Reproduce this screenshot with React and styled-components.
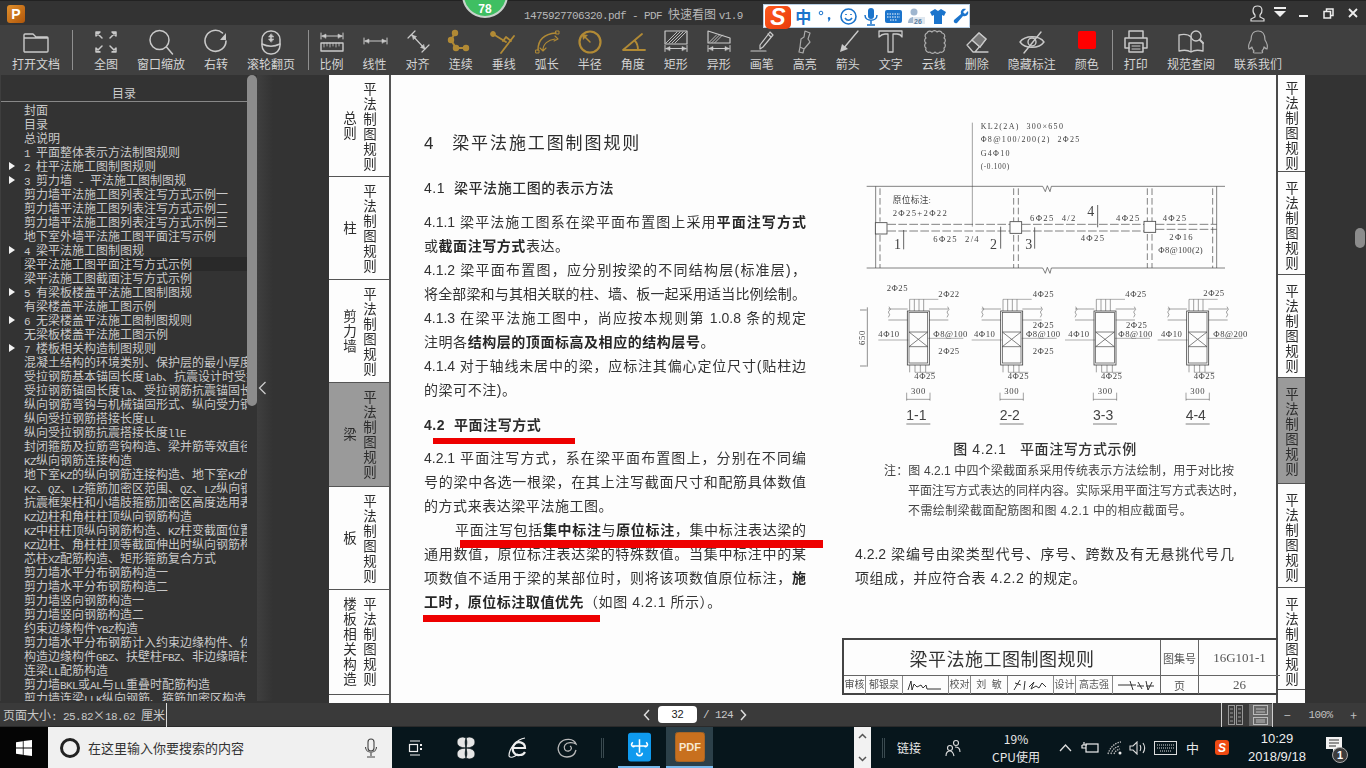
import React from 'react';
import styled, { createGlobalStyle } from 'styled-components';

const CJK = '"Noto Sans CJK SC", sans-serif';
const Global = createGlobalStyle`
  html, body { margin: 0; padding: 0; background: #333; overflow: hidden; }
  * { box-sizing: border-box; }
  #root { width: 1366px; height: 768px; }
`;

/* ---------- shell ---------- */
const Shell = styled.div`
  width: 1366px; height: 768px; display: flex; flex-direction: column;
  font-family: ${CJK}; position: relative; overflow: hidden; background: #333;
`;
const TitleBar = styled.header`
  height: 25px; background: #333; display: flex; align-items: center; position: relative;
  padding-left: 7px; border-top: 1px solid #222; flex: none;
`;
const AppLogo = styled.div`
  width: 18px; height: 18px; border-radius: 3px; margin-top: 1px;
  background: linear-gradient(135deg, #e08f2c, #b0560a);
  color: #fff; font: bold 14px/18px "Liberation Sans", sans-serif; text-align: center;
`;
const TitleText = styled.div`
  position: absolute; left: 524px; top: 4px; color: #b8b8b8; font-size: 12px; line-height: 17px; white-space: nowrap;
`;
const Mono = styled.span`font-family: "Liberation Mono", monospace; font-size: 11px; letter-spacing: -.6px; white-space: pre;`;
const Cross = styled.span`display: inline-block; width: 12px; text-align: center;`;
const Badge = styled.div`
  position: absolute; left: 462px; top: -29px; width: 46px; height: 46px; border-radius: 50%;
  background: #3fbf62; border: 2px solid #c9d2cc; color: #fff;
  font: bold 12px/12px "Liberation Sans", sans-serif; text-align: center; padding-top: 29px;
`;
const WinButtons = styled.div`
  margin-left: auto; display: flex; align-items: center; height: 24px;
`;
const WinBtn = styled.div`
  width: ${p => p.$w || 24}px; height: 24px; display: flex; align-items: center; justify-content: center;
`;
const ImeBar = styled.div`
  position: absolute; left: 763px; top: 3px; width: 207px; height: 24px; z-index: 5;
  background: #fff; border: 1px solid #b8cfe4; display: flex; align-items: center;
  padding-left: 28px; color: #1b74cc;
`;
const ImeLogo = styled.div`
  position: absolute; left: 1px; top: 1px; width: 26px; height: 23px; border-radius: 5px;
  background: linear-gradient(135deg, #ff5a1e, #e93c0c); color: #fff;
  font: italic bold 23px/23px "Liberation Sans", sans-serif; text-align: center;
`;
const ImeItem = styled.span`
  width: 22.5px; flex: none; display: flex; align-items: center; justify-content: center;
  font-size: 16px; font-weight: 700; line-height: 20px;
`;

const Toolbar = styled.nav`
  height: 50px; background: #404040; display: flex; align-items: stretch; padding-left: 2.5px; flex: none;
`;
const Sep = styled.div`
  width: 1px; height: 40px; margin: 5px ${p => p.$r}px 0 ${p => p.$l}px; background: #8f8f8f; flex: none;
`;
const Tool = styled.div`
  flex: none; display: flex; flex-direction: column; align-items: center; padding: 0 9.5px;
`;
const IconSlot = styled.div`
  height: 31px; width: 24px; padding-top: 4px; display: flex; justify-content: center;
  & > svg { flex: none; }
`;
const ToolLabel = styled.div`color: #d4d4d4; font-size: 12px; line-height: 16px; white-space: nowrap;`;

const Main = styled.main`flex: none; height: 628px; display: flex; background: #333;`;

/* ---------- sidebar ---------- */
const Side = styled.aside`
  width: 247px; height: 626px; background: #333; overflow: hidden; flex: none; border-left: 1px solid #3e3e3e;
`;
const SideHead = styled.div`
  height: 27px; border-bottom: 1px solid #888; color: #ccc; font-size: 12px; line-height: 36px; text-align: center;
`;
const Row = styled.div`
  height: 14px; line-height: 14px; font-size: 12px; color: #c9c9c9; white-space: nowrap; overflow: hidden;
  margin-left: 20px; padding-left: 3px; background: ${p => p.$on ? '#292929' : 'transparent'};
`;
const SideList = styled.div`padding-top: 1px;`;
const Arrow = styled.div`
  position: absolute; left: 8px; top: 2.5px; width: 0; height: 0; border-left: 6px solid #f2f2f2;
  border-top: 4.5px solid transparent; border-bottom: 4.5px solid transparent;
`;
const RowOuter = styled.div`position: relative;`;
const Scroll = styled.div`width: 10px; background: #333; flex: none; height: 626px;`;
const Thumb = styled.div`height: 331px; background: #8c8c8c; border-radius: 5px;`;
const Gutter = styled.div`
  width: 72px; flex: none; height: 626px; background: linear-gradient(90deg, #3f3f3f, #333 16px);
  display: flex; padding-top: 305px; padding-left: 1px;
`;

/* ---------- page ---------- */
const Page = styled.div`
  width: 976px; flex: none; display: flex; height: 628px; background: #fdfdfd; color: #2d2d2d;
  font-family: "Liberation Sans", ${CJK}; filter: blur(.3px);
`;
const LeftTabs = styled.div`width: 62px; flex: none; display: flex; flex-direction: column; border-right: 2px solid #555;`;
const RightTabs = styled.div`width: 27px; flex: none; display: flex; flex-direction: column;`;
const Tab = styled.div`
  height: ${p => p.$h}px; flex: none; display: flex; border-bottom: 1.5px solid #555;
  background: ${p => p.$on ? '#9a9a9a' : 'transparent'};
`;
const VText = styled.div`
  writing-mode: vertical-rl; text-orientation: upright; font-size: 13.5px; letter-spacing: 1.5px; white-space: nowrap;
  font-family: ${CJK}; line-height: 16px;
`;
const TabTitle = styled(VText)`width: 16px; margin-left: 13px; align-self: center;`;
const TabBody = styled(VText)`width: 16px; margin-left: ${p => p.$ml}px; padding-top: ${p => p.$pt || 7}px;`;

const Sheet = styled.div`
  width: 887px; flex: none; display: flex; flex-direction: column; border-right: 2px solid #4a4a4a; padding-bottom: 8px;
`;
const Cols = styled.div`height: 563px; display: flex; padding-left: 33px; gap: 44px;`;
const LeftCol = styled.section`width: 382px; padding-top: 57px; flex: none; position: relative;`;
const RightCol = styled.section`width: 400px; padding-top: 35px; flex: none;`;

const H1 = styled.h1`
  margin: 0 0 20px; font-size: 17px; font-weight: 400; height: 24px; line-height: 24px; letter-spacing: 1.9px; word-spacing: -1px; white-space: pre;
`;
const H2 = styled.h2`
  margin: ${p => p.$t || 0}px 0 ${p => p.$b || 0}px; font-size: 14px; font-weight: ${p => p.$w || 400}; height: 24px; line-height: 24px;
  letter-spacing: .55px; white-space: pre;
`;
const Line = styled.p`
  margin: 0; height: 24px; line-height: 24px; font-size: 14px; white-space: nowrap; color: #333;
  text-align: justify; text-align-last: ${p => p.$full ? 'justify' : 'left'};
  letter-spacing: ${p => p.$full ? 0 : .55}px; padding-left: ${p => p.$in || 0}px;
`;
const B = styled.b`font-weight: 700; color: #262626;`;
const Caption = styled.div`
  margin-top: 7px; height: 24px; line-height: 24px; font-size: 14px; color: #333; text-align: center; width: 390px; white-space: pre;
  letter-spacing: .6px; font-weight: 500;
`;
const Notes = styled.div`margin-left: 34px; width: 350px;`;
const Note = styled.p`
  margin: 0; height: 20px; line-height: 20px; font-size: 12px; white-space: nowrap; color: #444;
  padding-left: ${p => p.$in || 0}px; text-align-last: ${p => p.$full ? 'justify' : 'left'}; letter-spacing: ${p => p.$full ? 0 : .4}px;
`;
const Para = styled.div`margin-top: 21px; margin-left: 5px; width: 379px;`;
const RedMark = styled.div`
  position: absolute; left: ${p => p.$l}px; top: ${p => p.$t}px; width: ${p => p.$w}px; height: ${p => p.$h}px; background: #ee0000; z-index: 2;
`;
const Fig = styled.svg`display: block; width: 400px; height: 320px;`;

const TitleBlock = styled.div`
  width: 436px; align-self: flex-end; height: 57px; border: 2px solid #444; border-right: 0; display: grid;
  grid-template-columns: 317px 38px 81px; grid-template-rows: 36px 1fr; margin-right: -2px;
`;
const BlockName = styled.div`
  font-size: 18px; letter-spacing: .5px; display: flex; align-items: center; justify-content: center; color: #333;
  border-bottom: 1px solid #666; border-right: 1px solid #666;
`;
const BlockCell = styled.div`
  display: flex; align-items: center; justify-content: center; border-bottom: ${p => p.$top ? '1px solid #666' : 0};
  border-right: ${p => p.$r ? '1px solid #666' : 0}; font-size: ${p => p.$fs || 11}px; color: #555;
  font-family: ${p => p.$serif ? '"Liberation Serif", serif' : CJK};
`;
const SignRow = styled.div`display: flex; border-right: 1px solid #666; height: 100%;`;
const SignCell = styled.div`
  width: ${p => p.$w}px; flex: none; display: flex; align-items: center; justify-content: center; font-size: 10px; color: #555;
  border-right: ${p => p.$last ? 0 : '1px solid #888'}; white-space: pre; overflow: hidden; line-height: 18px;
`;

/* ---------- overlays ---------- */
const RightThumb = styled.div`
  position: absolute; left: 1355px; top: 228px; width: 10px; height: 20px; border-radius: 5px; background: #8c8c8c;
`;

/* ---------- status ---------- */
const Status = styled.footer`
  height: 24px; background: #3a3a3a; display: flex; align-items: center; color: #c8c8c8; font-size: 12px; flex: none; border-bottom: 1px solid #2a2a2a;
`;
const SizeText = styled.div`width: 167px; padding-left: 3px; height: 24px; line-height: 24px; border-right: 1px solid #ddd; white-space: nowrap; flex: none;`;
const Pager = styled.div`margin-left: 476px; display: flex; align-items: center; width: 110px; flex: none;`;
const PageInput = styled.div`
  width: 39px; height: 17px; background: #fff; border-radius: 4px; color: #222; font: 11px/17px "Liberation Sans", sans-serif; text-align: center; margin: 0 6px 0 7px;
`;
const PageCount = styled(Mono)`margin-right: 6px;`;
const ViewBar = styled.div`margin-left: 468px; display: flex; align-items: center; height: 24px;`;
const VSep = styled.div`width: 1px; height: 24px; background: #cfcfcf; flex: none;`;
const ViewBtn = styled.div`
  width: ${p => p.$w}px; height: 22px; display: flex; align-items: center; justify-content: center; background: ${p => p.$on ? '#666' : 'transparent'};
`;
const Zoomer = styled.div`display: flex; align-items: center; width: 92px; justify-content: space-between; padding: 0 8px 0 11px; color: #c0c0c0;`;

const Taskbar = styled.div`
  height: 41px; background: #07161c; display: flex; align-items: stretch; color: #e8e8e8; flex: none; position: relative;
`;
const Start = styled.div`width: 48px; background: #050505; display: flex; align-items: center; justify-content: center; flex: none;`;
const Search = styled.div`
  width: 344px; background: #f0f0f0; display: flex; align-items: center; flex: none; padding-left: 12px; color: #333; font-size: 13px;
`;
const Ring = styled.div`width: 20px; height: 20px; border: 3px solid #222; border-radius: 50%; margin-right: 8px; flex: none;`;
const MicGap = styled.div`margin-left: 120px; display: flex;`;
const TaskIcon = styled.div`
  width: ${p => p.$w}px; flex: none; display: flex; align-items: center; justify-content: center;
  background: ${p => p.$on ? '#2c4049' : 'transparent'}; border-bottom: ${p => p.$line ? '2px solid #76b9ed' : 0};
`;
const TrayIcon = styled.div`margin-left: ${p => p.$ml}px; flex: none; display: flex; align-items: center;`;
const ScrollBox = styled.div`
  width: 17px; background: #f2f2f2; margin-left: 141px; display: flex; flex-direction: column; justify-content: space-between; align-items: center; padding: 6px 0; flex: none; color: #555;
`;
const TrayText = styled.div`
  width: ${p => p.$w}px; margin-left: ${p => p.$ml || 0}px; flex: none; text-align: center; font-size: ${p => p.$fs || 12}px; line-height: 18px; align-self: center; white-space: pre-line; color: #e8e8e8;
`;
const Bar = styled.div`width: 3px; height: 20px; border-left: 1px solid #3a4a50; border-right: 1px solid #3a4a50; align-self: center; flex: none; margin: 0 ${p => p.$m || 0}px;`;
const DateText = styled.div`
  width: 74px; text-align: center; font: 13px/18px "Liberation Sans", sans-serif; align-self: center; white-space: pre-line; flex: none; color: #eee; margin-left: 11px;
`;
const NoteBadge = styled.div`
  position: absolute; left: 1332px; top: 747px; width: 16px; height: 16px; border-radius: 50%;
  background: #3c3c3c; border: 1px solid #aaa; color: #fff; font: bold 11px/14px "Liberation Sans", sans-serif; text-align: center;
`;

/* ---------- helpers ---------- */
const Mixed = ({ t }) => t.split(/([\x20-\x7e]+)/).map((s, i) =>
  /^[\x20-\x7e]+$/.test(s) ? <Mono key={i}>{s}</Mono> : s);

const W = '#c9c9c9', G = '#b18a35';
const Ic = ({ children, w = 30, h = 27, c = W, sw = 1.6, fill = 'none' }) => (
  <svg width={w} height={h} viewBox={`0 0 ${w} ${h}`} fill={fill} stroke={c} strokeWidth={sw} strokeLinecap="round" strokeLinejoin="round">{children}</svg>
);
const hatch = (x1, x2, y1, y2, step) => {
  const out = [];
  for (let x = x1; x < x2; x += step) out.push(<line key={x} x1={x} y1={y2} x2={x + (y2 - y1)} y2={y1} strokeWidth=".9" />);
  return out;
};
const DimBar = ({ y = 19, a = 4, b = 26 }) => (<>
  <path d={`M${a} ${y - 3}v6M${b} ${y - 3}v6M${a + 1} ${y}H${b - 1}`} strokeWidth="1" />
  <path d={`M${a + 1} ${y}l4-2v4zM${b - 1} ${y}l-4-2v4z`} fill={W} strokeWidth=".5" />
</>);

const icons = {
  open: <Ic sw={1.4}><path d="M4 5h8l3 3h11a1 1 0 0 1 1 1v13a1 1 0 0 1-1 1H4a1 1 0 0 1-1-1V6a1 1 0 0 1 1-1zM3 9h24" /></Ic>,
  full: <Ic sw={1.5}><path d="M5 3l6 6M5 3v4l4-4zM25 3l-6 6M25 3v4l-4-4zM5 23l6-6M5 23v-4l4 4zM25 23l-6-6M25 23v-4l-4 4z" /></Ic>,
  zoom: <Ic sw={1.5}><circle cx="13.5" cy="11" r="9.5" /><path d="M20.5 18l6 7" /></Ic>,
  rot: <Ic sw={1.6}><path d="M25 12a10.5 10.5 0 1 1-3.5-8" /><path d="M25 4v7h-6z" fill={W} stroke="none" /></Ic>,
  wheel: <Ic sw={1.5}><rect x="6" y="2" width="18" height="23" rx="8.5" /><path d="M6 15c6 3 12 3 18 0" /><path d="M15 5l-2.5 3h5zM15 13l-2.5-3h5z" fill={W} strokeWidth=".6" /><path d="M15 8v2" /></Ic>,
  scale: <Ic sw={1}><DimBar y={7} /><rect x="4" y="14" width="22" height="8" strokeWidth="1.4" /><path d="M7 14v4M10 14v3M13 14v4M16 14v3M19 14v4M22 14v3" strokeWidth=".8" /></Ic>,
  linear: <Ic sw={1}><DimBar y={12} a={4} b={27} /></Ic>,
  align: <Ic sw={1.2}><path d="M5 9L12 2M19 23l7-7M9 6l13 14" /><path d="M9 6l4.5 1.5-3 3zM22 20l-4.5-1.5 3-3z" fill={W} strokeWidth=".5" /></Ic>,
  cont: <Ic c={G} sw={2}><path d="M9 4l-4 7 5 8h10" /><circle cx="9" cy="4" r="2.2" fill={G} /><circle cx="5" cy="11" r="2.2" fill={G} /><circle cx="10" cy="19" r="2.2" fill={G} /><circle cx="20" cy="19" r="2.2" fill={G} /></Ic>,
  perp: <Ic c={G} sw={1.8}><path d="M4 5l13 8M25 7L12 24M14 12l3-4 5 4" /><circle cx="4" cy="5" r="2" fill={G} /></Ic>,
  arc: <Ic c={G} sw={1.5}><path d="M6 21C6 11 12 5 24 4" /><path d="M11 21c0-6 5-10 12-11M23 7l3 3-4 2M8 19l3 3 3-3" strokeWidth="1.1" /><rect x="24" y="2" width="3" height="3" strokeWidth="1" /><rect x="4" y="21" width="3" height="3" strokeWidth="1" /></Ic>,
  radius: <Ic c={G} sw={2.2}><circle cx="15" cy="13" r="10.5" /><path d="M15 13L9 7" strokeWidth="1.5" /><path d="M7 5l6 1-5 5z" fill={G} stroke="none" /></Ic>,
  angle: <Ic c={G} sw={1.8}><path d="M24 5L5 21h22M17 12c2 2 3 5 3 9" /></Ic>,
  rect: <Ic sw={1}><rect x="4" y="2" width="22" height="13" strokeWidth="1.2" />{hatch(5, 15, 3, 14, 3)}<DimBar y={19.5} /></Ic>,
  shape: <Ic sw={1}><path d="M4 2L26 9v5H4z" strokeWidth="1.2" />{hatch(5, 14, 6, 13.5, 3)}<DimBar y={19.5} /></Ic>,
  pen: <Ic sw={1.2}><path d="M16 18l-3 2 0-4L23 3l3 3zM21 5l3 3M4 22h15" /></Ic>,
  mark: <Ic sw={1.2} c="#aaa"><path d="M15 2l5 2-2 6 2 3-6 7-4-2 1-8 3-2zM10 18l-1 5 4 1 1-4" /></Ic>,
  arrow: <Ic sw={1.4}><path d="M25 2L10 20" /><path d="M7 23l2-8 6 5z" fill={W} stroke="none" /></Ic>,
  text: <Ic sw={1.3}><path d="M3 2h23v6c-1-2-3-3-5-3h-4v18h-5V5H9C7 5 5 6 3 8z" /></Ic>,
  cloud: <Ic sw={1.2} c="#b0b0b0"><path d="M8 4a3 3 0 0 1 5-1 3 3 0 0 1 5 0 3 3 0 0 1 5 1 3 3 0 0 1 2 5 3 3 0 0 1 0 5 3 3 0 0 1 0 5 3 3 0 0 1-4 4 3 3 0 0 1-5 0 3 3 0 0 1-5 0 3 3 0 0 1-4-4 3 3 0 0 1 0-5 3 3 0 0 1 0-5 3 3 0 0 1 1-5z" /></Ic>,
  erase: <Ic sw={1.3}><path d="M5 16L17 4l7 6-11 13H11zM10 11l8 7M11 23h15" /><path d="M17 4l7 6-6 8-8-7z" fill="#777" /></Ic>,
  hide: <Ic sw={1.4}><path d="M3 13c5-7 19-7 24 0-5 7-19 7-24 0z" /><circle cx="15" cy="13" r="4" /><path d="M24 3L7 24" /></Ic>,
  color: <svg width="18" height="18" style={{ marginTop: 2 }}><rect width="18" height="18" rx="2" fill="#f00" /></svg>,
  print: <Ic sw={1.5}><path d="M8 8V2h14v6M8 19H4V9h22v10h-4" /><rect x="8" y="14" width="14" height="9" /><path d="M11 17h8M11 20h8" strokeWidth="1" /></Ic>,
  book: <Ic sw={1.3}><path d="M15 8C12 5 7 5 3 6v16c4-1 9-1 12 1 3-2 8-2 12-1V14M15 8v15" /><circle cx="20" cy="7" r="5" /><path d="M24 11l3 3" strokeWidth="2" /></Ic>,
  qq: <Ic sw={1.2} c="#aaa"><path d="M15 2c5 0 7 4 7 9 2 3 3 6 2 9-1 0-2-1-3-2 0 2-1 3-2 4 1 1 1 2-1 2h-6c-2 0-2-1-1-2-1-1-2-2-2-4-1 1-2 2-3 2-1-3 0-6 2-9 0-5 2-9 7-9z" /></Ic>,
};

const tools = [
  ['打开文档', 'open'], ['|', 2.5, 11.5], ['全图', 'full'], ['窗口缩放', 'zoom'], ['右转', 'rot'], ['滚轮翻页', 'wheel'], ['|', 3, 1.5],
  ['比例', 'scale'], ['线性', 'linear'], ['对齐', 'align'], ['连续', 'cont'], ['垂线', 'perp'], ['弧长', 'arc'], ['半径', 'radius'], ['角度', 'angle'],
  ['矩形', 'rect'], ['异形', 'shape'], ['画笔', 'pen'], ['高亮', 'mark'], ['箭头', 'arrow'], ['文字', 'text'], ['云线', 'cloud'], ['删除', 'erase'],
  ['隐藏标注', 'hide'], ['颜色', 'color'], ['|', 3.5, 1.5], ['打印', 'print'], ['规范查阅', 'book'], ['联系我们', 'qq'],
];

const toc = [
  ['封面'], ['目录'], ['总说明'], ['1 平面整体表示方法制图规则'], ['2 柱平法施工图制图规则', 1], ['3 剪力墙 - 平法施工图制图规', 1],
  ['剪力墙平法施工图列表注写方式示例一'], ['剪力墙平法施工图列表注写方式示例二'], ['剪力墙平法施工图列表注写方式示例三'], ['地下室外墙平法施工图平面注写示例'],
  ['4 梁平法施工图制图规', 1], ['梁平法施工图平面注写方式示例', 0, 1], ['梁平法施工图截面注写方式示例'], ['5 有梁板楼盖平法施工图制图规', 1],
  ['有梁楼盖平法施工图示例'], ['6 无梁楼盖平法施工图制图规则', 1], ['无梁板楼盖平法施工图示例'], ['7 楼板相关构造制图规则', 1],
  ['混凝土结构的环境类别、保护层的最小厚度'], ['受拉钢筋基本锚固长度lab、抗震设计时受拉钢筋'], ['受拉钢筋锚固长度la、受拉钢筋抗震锚固长度'], ['纵向钢筋弯钩与机械锚固形式、纵向受力钢筋'],
  ['纵向受拉钢筋搭接长度LL'], ['纵向受拉钢筋抗震搭接长度llE'], ['封闭箍筋及拉筋弯钩构造、梁并筋等效直径'], ['KZ纵向钢筋连接构造'],
  ['地下室KZ的纵向钢筋连接构造、地下室KZ的'], ['KZ、QZ、LZ箍筋加密区范围、QZ、LZ纵向钢筋'], ['抗震框架柱和小墙肢箍筋加密区高度选用表'], ['KZ边柱和角柱柱顶纵向钢筋构造'],
  ['KZ中柱柱顶纵向钢筋构造、KZ柱变截面位置'], ['KZ边柱、角柱柱顶等截面伸出时纵向钢筋构造'], ['芯柱XZ配筋构造、矩形箍筋复合方式'], ['剪力墙水平分布钢筋构造一'], ['剪力墙水平分布钢筋构造二'],
  ['剪力墙竖向钢筋构造一'], ['剪力墙竖向钢筋构造二'], ['约束边缘构件YBZ构造'], ['剪力墙水平分布钢筋计入约束边缘构件、体'], ['构造边缘构件GBZ、扶壁柱FBZ、非边缘暗柱'],
  ['连梁LL配筋构造'], ['剪力墙BKL或AL与LL重叠时配筋构造'], ['剪力墙连梁LLK纵向钢筋、箍筋加密区构造'],
];

const leftTabs = [['总则', 102], ['柱', 103], ['剪力墙', 103], ['梁', 104, 1], ['板', 103], ['楼板相关构造', 105]];
const rightTabs = [97, 103, 103, 106, 104, 102];

/* ---------- figure ---------- */
const FT = styled.text`
  font-family: "Liberation Serif", ${CJK}; fill: #444; font-size: ${p => p.$s || 26}px;
  letter-spacing: ${p => p.$ls ?? 4}px; white-space: pre;
`;
const SectionTitle = styled.text`font-family: "Liberation Sans", sans-serif; fill: #444; font-size: 42px;`;

const sections = [
  { c: 205, t: '1-1', top: ['2Φ25', 110, 542], top2: ['2Φ22', 265, 560], mid: '4Φ10', midx: 85, hoop: 'Φ8@100', hx: 250, y2: ['2Φ25', 265, 732], bot: '4Φ25' },
  { c: 485, t: '2-2', top: ['4Φ25', 548, 560], y1: ['2Φ25', 548, 655], mid: '4Φ10', midx: 372, hoop: 'Φ8@100', hx: 528, y2: ['2Φ25', 548, 732], bot: '4Φ25' },
  { c: 765, t: '3-3', top: ['4Φ25', 826, 560], y1: ['2Φ25', 828, 655], mid: '4Φ10', midx: 655, hoop: 'Φ8@100', hx: 805, bot: '4Φ25' },
  { c: 1043, t: '4-4', top: ['2Φ25', 1060, 557], mid: '4Φ10', midx: 933, hoop: 'Φ8@200', hx: 1090, bot: '4Φ25' },
];

const Section = ({ s }) => {
  const c = s.c;
  return (
    <g stroke="#444" fill="none" strokeWidth="1.8">
      <path d={`M${c - 90} 597H${c - 32}M${c - 90} 630H${c - 32}M${c + 32} 597H${c + 90}M${c + 32} 630H${c + 90}M${c - 88} 590l4 8-6 8 4 8-4 8M${c + 88} 590l4 8-6 8 4 8-4 8`} strokeWidth="1.5" />
      <rect x={c - 33} y={603} width={66} height={162} strokeWidth="2.5" />
      <rect x={c - 28} y={607} width={56} height={152} strokeWidth="2" />
      <path d={`M${c - 28} 666H${c + 28}M${c - 28} 710H${c + 28}M${c - 28} 666L${c} 688 ${c + 28} 666M${c - 28} 710L${c} 688 ${c + 28} 710`} strokeWidth="2" />
      <path d={`M${c - 26} 568v35M${c - 12} 568v35M${c + 2} 568v35M${c + 16} 568v35M${c - 26} 765v22M${c - 10} 765v22M${c + 6} 765v22M${c + 22} 765v22`} strokeWidth="1.5" />
      <path d={`M${c - 26} 568H${c + 60}`} strokeWidth="1.3" />
      <path d={`M${c - 10} 787H${c + 50}M${c - 120} 690H${c - 30}M${c + 30} 685H${c + 135}`} strokeWidth="1.3" />
      <path d={`M${c - 35} 848v24M${c + 35} 848v24M${c - 35} 868H${c + 35}`} strokeWidth="1.5" />
      <path d={`M${c - 36} 942H${c + 36}`} strokeWidth="2" />
      <g stroke="none" fill="#444">
        <FT $ls={1.5} x={s.top[1]} y={s.top[2]}>{s.top[0]}</FT>
        {s.top2 && <FT $ls={1.5} x={s.top2[1]} y={s.top2[2]}>{s.top2[0]}</FT>}
        {s.y1 && <FT $ls={1.5} x={s.y1[1]} y={s.y1[2]}>{s.y1[0]}</FT>}
        {s.y2 && <FT $ls={1.5} x={s.y2[1]} y={s.y2[2]}>{s.y2[0]}</FT>}
        <FT $ls={1.5} x={s.midx} y={681}>{s.mid}</FT>
        <FT $ls={1.5} x={s.hx} y={680}>{s.hoop}</FT>
        <FT $ls={1.5} x={c - 12} y={806}>{s.bot}</FT>
        <FT $ls={2} x={c - 22} y={852}>300</FT>
        <SectionTitle x={c - 36} y={930}>{s.t}</SectionTitle>
      </g>
    </g>
  );
};

const Figure = () => (
  <Fig viewBox="0 0 1200 960">
    <g stroke="#444" fill="none" strokeWidth="2">
      <path d="M367 38V350" strokeWidth="1.5" />
      <path d="M50 229H578l8 16 6-18 8 18 4-16H1125M50 474H578l8 16 6-18 8 18 4-16H1125" />
      <path d="M77 229V474M1100 229V474" />
      <path d="M90 235V335M90 375V474M491 235V335M505 235V335M491 375V474M505 375V474M892 235V335M906 235V335M892 372V474M906 372V474M1088 235V474" strokeDasharray="20 9" />
      <path d="M112 343H480M112 363H480M516 343H882M516 363H882M917 343H1100M917 358H1100" strokeDasharray="26 7" />
      <rect x="76" y="338" width="35" height="34" fill="#fdfdfd" strokeWidth="2.5" />
      <rect x="480" y="335" width="35" height="35" fill="#fdfdfd" strokeWidth="2.5" />
      <rect x="882" y="334" width="35" height="33" fill="#fdfdfd" strokeWidth="2.5" />
      <path d="M161 360V418M452 350V416M554 352V416M743 285V352" strokeWidth="2.5" />
    </g>
    <FT x={392} y={57} $s={24}>KL2(2A)  300×650</FT>
    <FT x={392} y={97} $s={24}>Φ8@100/200(2)  2Φ25</FT>
    <FT x={392} y={139} $s={24}>G4Φ10</FT>
    <FT x={392} y={178} $s={22} $ls={2}>(-0.100)</FT>
    <FT x={128} y={278} $s={26} $ls={1}>原位标注:</FT>
    <FT x={128} y={317}>2Φ25+2Φ22</FT>
    <FT x={132} y={417} $s={42} $ls={0}>1</FT>
    <FT x={250} y={397}>6Φ25  2/4</FT>
    <FT x={420} y={417} $s={42} $ls={0}>2</FT>
    <FT x={526} y={416} $s={42} $ls={0}>3</FT>
    <FT x={540} y={332}>6Φ25  4/2</FT>
    <FT x={712} y={318} $s={42} $ls={0}>4</FT>
    <FT x={798} y={332}>4Φ25</FT>
    <FT x={938} y={332}>4Φ25</FT>
    <FT x={692} y={392}>4Φ25</FT>
    <FT x={958} y={390}>2Φ16</FT>
    <FT x={925} y={429} $ls={1}>Φ8@100(2)</FT>
    <path d="M30 600H50M30 768H50M52 592V770" stroke="#444" strokeWidth="1.8" fill="none" />
    <FT transform="translate(44 705) rotate(-90)" $ls={2}>650</FT>
    {sections.map(s => <Section key={s.t} s={s} />)}
  </Fig>
);

const Sign = ({ d }) => <svg width="40" height="15" viewBox="0 0 40 15"><path d={d} fill="none" stroke="#333" strokeWidth="1" /></svg>;

export default function App() {
  return (
    <Shell>
      <Global />
      <TitleBar>
        <AppLogo>P</AppLogo>
        <Badge>78</Badge>
        <TitleText><Mono>1475927706320.pdf - PDF </Mono>快速看图 <Mono>v1.9</Mono></TitleText>
        <ImeBar>
          <ImeLogo>S</ImeLogo>
          <ImeItem>中</ImeItem>
          <ImeItem><svg width="20" height="18" viewBox="0 0 20 18" fill="#1b74cc"><circle cx="5" cy="6" r="1.8" fill="none" stroke="#1b74cc" /><path d="M13 10c2 0 2 3-1 5 .5-1 .5-2 .2-3-1-1-.2-2 .8-2z" /></svg></ImeItem>
          <ImeItem><svg width="17" height="17" viewBox="0 0 17 17" fill="none" stroke="#1b74cc" strokeWidth="1.6"><circle cx="8.5" cy="8.5" r="7.5" /><path d="M5 10c2 3 5 3 7 0M6 6v1M11 6v1" /></svg></ImeItem>
          <ImeItem><svg width="14" height="19" viewBox="0 0 14 19" fill="#1b74cc"><rect x="4" y="1" width="6" height="11" rx="3" /><path d="M1 8c0 7 12 7 12 0M7 14v3M3 18h8" fill="none" stroke="#1b74cc" strokeWidth="1.5" /></svg></ImeItem>
          <ImeItem><svg width="17" height="13" viewBox="0 0 17 13"><rect width="17" height="13" rx="2" fill="#1b74cc" /><path d="M2 4h13M2 7h13M5 10h7" stroke="#fff" strokeDasharray="1.5 1" /></svg></ImeItem>
          <ImeItem><svg width="18" height="16" viewBox="0 0 18 16" fill="#9fb6cf"><circle cx="7" cy="4" r="3.5" /><path d="M1 15c0-8 11-8 11 0z" /><rect x="6" y="9" width="12" height="7" fill="#dfe7ef" /><text x="7" y="15.5" fontSize="7" fill="#5a7da0" fontFamily="Liberation Sans">26</text></svg></ImeItem>
          <ImeItem><svg width="16" height="15" viewBox="0 0 16 15" fill="#1b74cc"><path d="M5 0l3 2 3-2 5 3-2 4-2-1v9H4V6L2 7 0 3z" /></svg></ImeItem>
          <ImeItem><svg width="16" height="16" viewBox="0 0 16 16" fill="#1b74cc"><path d="M15 3l-3 3-2-2 3-3c-3-1-6 1-5 5L1 12c-1 2 1 4 3 3l6-7c4 1 6-2 5-5z" /></svg></ImeItem>
        </ImeBar>
        <WinButtons>
          <WinBtn>
            <svg width="15" height="17" viewBox="0 0 15 17" fill="none" stroke="#ddd" strokeWidth="1.2"><path d="M7.5 1c-6 0-5 7-2.500 9v2l-4 2v2h13v-2l-4-2v-2c2.500-2 3.500-9-2.500-9z" /></svg>
          </WinBtn>
          <WinBtn $w={22}>
            <svg width="12" height="12" viewBox="0 0 12 12" fill="#eee"><rect y="0" width="12" height="2" /><path d="M0 4h12L6 10z" /></svg>
          </WinBtn>
          <WinBtn $w={24}><svg width="9" height="9"><rect y="6" width="9" height="2" fill="#eee" /></svg></WinBtn>
          <WinBtn $w={26}>
            <svg width="11" height="11" fill="none" stroke="#eee" strokeWidth="1.5"><rect x="1" y="3.5" width="6.5" height="6.5" /><path d="M3.500 3V1h6.500v6.500H8" /></svg>
          </WinBtn>
          <WinBtn $w={24}>
            <svg width="10" height="10" stroke="#eee" strokeWidth="1.8"><path d="M1 1l8 8M9 1l-8 8" /></svg>
          </WinBtn>
          <WinBtn $w={1} />
        </WinButtons>
      </TitleBar>

      <Toolbar>
        {tools.map(([a, b, c], i) => a === '|'
          ? <Sep key={i} $l={b} $r={c} />
          : <Tool key={a}><IconSlot>{icons[b]}</IconSlot><ToolLabel>{a}</ToolLabel></Tool>)}
      </Toolbar>

      <Main>
        <Side>
          <SideHead>目录</SideHead>
          <SideList>
            {toc.map(([t, arrow, on], i) => (
              <RowOuter key={i}>
                {arrow ? <Arrow /> : null}
                <Row $on={on}><Mixed t={t} /></Row>
              </RowOuter>
            ))}
          </SideList>
        </Side>
        <Scroll><Thumb /></Scroll>
        <Gutter>
          <svg width="10" height="16" viewBox="0 0 10 16" fill="none" stroke="#ccc" strokeWidth="1.3"><path d="M7.500 2L1.500 8l6 6" /></svg>
        </Gutter>
        <Page>
          <LeftTabs>
            {leftTabs.map(([t, h, on]) => (
              <Tab key={t} $h={h} $on={on}>
                <TabTitle>{t}</TabTitle>
                <TabBody $ml={4}>平法制图规则</TabBody>
              </Tab>
            ))}
          </LeftTabs>
          <Sheet>
            <Cols>
              <LeftCol>
                <H1>4   梁平法施工图制图规则</H1>
                <H2 $b={10} $w={500}>4.1  梁平法施工图的表示方法</H2>
                <Line $full>4.1.1 梁平法施工图系在梁平面布置图上采用<B>平面注写方式</B></Line>
                <Line>或<B>截面注写方式</B>表达。</Line>
                <Line $full>4.1.2 梁平面布置图，应分别按梁的不同结构层(标准层)，</Line>
                <Line $full>将全部梁和与其相关联的柱、墙、板一起采用适当比例绘制。</Line>
                <Line $full>4.1.3 在梁平法施工图中，尚应按本规则第 1.0.8 条的规定</Line>
                <Line>注明各<B>结构层的顶面标高及相应的结构层号</B>。</Line>
                <Line $full>4.1.4 对于轴线未居中的梁，应标注其偏心定位尺寸(贴柱边</Line>
                <Line>的梁可不注)。</Line>
                <H2 $t={11} $b={9} $w={700}>4.2  平面注写方式</H2>
                <Line $full>4.2.1 平面注写方式，系在梁平面布置图上，分别在不同编</Line>
                <Line $full>号的梁中各选一根梁，在其上注写截面尺寸和配筋具体数值</Line>
                <Line>的方式来表达梁平法施工图。</Line>
                <Line $full $in={31}>平面注写包括<B>集中标注</B>与<B>原位标注</B>，集中标注表达梁的</Line>
                <Line $full>通用数值，原位标注表达梁的特殊数值。当集中标注中的某</Line>
                <Line $full>项数值不适用于梁的某部位时，则将该项数值原位标注，<B>施</B></Line>
                <Line><B>工时，原位标注取值优先</B>（如图 4.2.1 所示）。</Line>
                <RedMark $l={9} $t={363} $w={142} $h={6} />
                <RedMark $l={36} $t={465} $w={363} $h={8} />
                <RedMark $l={-1} $t={540} $w={177} $h={7} />
              </LeftCol>
              <RightCol>
                <Figure />
                <Caption>图 4.2.1   平面注写方式示例</Caption>
                <Notes>
                  <Note $full>注：图 4.2.1 中四个梁截面系采用传统表示方法绘制，用于对比按</Note>
                  <Note $in={24} $full>平面注写方式表达的同样内容。实际采用平面注写方式表达时，</Note>
                  <Note $in={24}>不需绘制梁截面配筋图和图 4.2.1 中的相应截面号。</Note>
                </Notes>
                <Para>
                  <Line $full>4.2.2 梁编号由梁类型代号、序号、跨数及有无悬挑代号几</Line>
                  <Line>项组成，并应符合表 4.2.2 的规定。</Line>
                </Para>
              </RightCol>
            </Cols>
            <TitleBlock>
              <BlockName>梁平法施工图制图规则</BlockName>
              <BlockCell $top $r>图集号</BlockCell>
              <BlockCell $top $fs={13} $serif>16G101-1</BlockCell>
              <SignRow>
                <SignCell $w={22}>审核</SignCell>
                <SignCell $w={37}>郁银泉</SignCell>
                <SignCell $w={46}><Sign d="M2 12l3-9 1 9 2-6 3 3 4-2 2 3 3-3 1 4h14" /></SignCell>
                <SignCell $w={22}>校对</SignCell>
                <SignCell $w={37}>刘  敏</SignCell>
                <SignCell $w={46}><Sign d="M4 5l6 2M9 2L3 12M14 3l-1 9M18 9l5-5-3 7 5-3 3 2 3-5 4 4" /></SignCell>
                <SignCell $w={22}>设计</SignCell>
                <SignCell $w={37}>高志强</SignCell>
                <SignCell $w={46} $last><Sign d="M2 7h10M14 3l3 9M12 7h8M22 4l4 7M21 8h7M30 3l2 9 4-8M30 8h8" /></SignCell>
              </SignRow>
              <BlockCell $r>页</BlockCell>
              <BlockCell $fs={13} $serif>26</BlockCell>
            </TitleBlock>
          </Sheet>
          <RightTabs>
            {rightTabs.map((h, i) => (
              <Tab key={i} $h={h} $on={i === 3}>
                <TabBody $ml={6} $pt={i === 0 ? 6 : 9}>平法制图规则</TabBody>
              </Tab>
            ))}
          </RightTabs>
        </Page>
      </Main>
      <RightThumb />

      <Status>
        <SizeText>页面大小<Mono>: 25.82</Mono><Cross>×</Cross><Mono>18.62 </Mono>厘米</SizeText>
        <Pager>
          <svg width="8" height="12" viewBox="0 0 8 12" fill="none" stroke="#ddd" strokeWidth="1.5"><path d="M6 1L1.500 6 6 11" /></svg>
          <PageInput>32</PageInput>
          <PageCount>/ 124</PageCount>
          <svg width="8" height="12" viewBox="0 0 8 12" fill="none" stroke="#ddd" strokeWidth="1.5"><path d="M2 1l4.500 5L2 11" /></svg>
        </Pager>
        <ViewBar>
          <VSep />
          <ViewBtn $w={27}>
            <svg width="15" height="20" fill="none" stroke="#999"><rect x=".5" y=".5" width="6" height="19" /><rect x="8.5" y=".5" width="6" height="19" /><path d="M2 4h3M2 8h3M2 12h3M2 16h3M10 4h3M10 8h3M10 12h3M10 16h3" /></svg>
          </ViewBtn>
          <ViewBtn $w={23} $on>
            <svg width="15" height="20" fill="none" stroke="#bbb"><rect x=".5" y=".5" width="14" height="9" /><rect x=".5" y="12.5" width="14" height="7" /><path d="M3 4h9M3 7h9M3 15h9M3 17h9" /></svg>
          </ViewBtn>
          <VSep />
          <Zoomer>
            <span>−</span>
            <Mono>100%</Mono>
            <span>+</span>
          </Zoomer>
        </ViewBar>
      </Status>

      <Taskbar>
        <Start>
          <svg width="16" height="16" viewBox="0 0 16 16" fill="#fff"><path d="M0 2.200L6.800 1.200V7.500H0zM7.600 1.100L16 0V7.500H7.600zM0 8.400H6.800V14.800L0 13.800zM7.600 8.400H16V16L7.600 14.900z" /></svg>
        </Start>
        <Search>
          <Ring />
          在这里输入你要搜索的内容
          <MicGap>
            <svg width="14" height="20" viewBox="0 0 14 20" fill="none" stroke="#444" strokeWidth="1.1"><rect x="4" y="1" width="6" height="12" rx="3" /><path d="M1.500 9c0 7 11 7 11 0M7 15v3M3 19h8" /></svg>
          </MicGap>
        </Search>
        <TaskIcon $w={46}>
          <svg width="16" height="16" viewBox="0 0 16 16" fill="none" stroke="#eee" strokeWidth="1.2"><path d="M3 1h10M3 15h10" /><rect x="2.500" y="4.500" width="8" height="7" /><path d="M14 4v2M14 8v2" strokeWidth="2" /></svg>
        </TaskIcon>
        <TaskIcon $w={56}>
          <svg width="22" height="24" viewBox="0 0 22 24" fill="#e6e6e6"><path d="M11 12C6 12 2 10 2 6c0-4 4-5 6-5 3 0 5 3 3 11zM11 12c5 0 9-2 9-6 0-4-4-5-6-5-3 0-5 3-3 11zM11 12c-5 0-9 2-9 6 0 4 4 5 6 5 3 0 5-3 3-11zM11 12c5 0 9 2 9 6 0 4-4 5-6 5-3 0-5-3-3-11z" stroke="#07151b" strokeWidth=".8" /></svg>
        </TaskIcon>
        <TaskIcon $w={48}>
          <svg width="22" height="24" viewBox="0 0 22 24" fill="none" stroke="#eee" strokeWidth="2.2"><path d="M6 12h12c0-6-8-8-11-3-3 5 0 11 6 10 2 0 4-1 5-3" /><path d="M18 2C10 3 2 12 2 20c2 3 6 0 9-2" strokeWidth="1.2" /></svg>
        </TaskIcon>
        <TaskIcon $w={50}>
          <svg width="22" height="22" viewBox="0 0 22 22" fill="none" stroke="#bbb" strokeWidth="1.3"><path d="M4 6c4-5 14-5 16 1-3-2-9-2-11 1-2 3 0 7 4 6 3-1 3-4 1-5M4 6C0 12 3 20 11 20c5 0 8-3 9-7" /></svg>
        </TaskIcon>
        <TaskIcon $w={9} />
        <Bar />
        <TaskIcon $w={14} />
        <TaskIcon $w={42} $line>
          <svg width="23" height="30" viewBox="0 0 24 30"><rect width="24" height="30" rx="3" fill="#0f9aee" /><path d="M12 7v14M5 14h14M5 10c-3 3 0 6 2 4M19 10c3 3 0 6-2 4M9 21c0 4 6 4 6 0" stroke="#fff" strokeWidth="1.6" fill="none" /></svg>
        </TaskIcon>
        <TaskIcon $w={6} />
        <TaskIcon $w={47} $on $line>
          <svg width="30" height="30" viewBox="0 0 30 30"><rect width="30" height="30" rx="4" fill="#c8701e" stroke="#8a5a2a" /><text x="15" y="19" textAnchor="middle" fontSize="11" fontWeight="700" fill="#f7e8d0" fontFamily="Liberation Sans">PDF</text></svg>
        </TaskIcon>
        <ScrollBox>
          <svg width="9" height="6" viewBox="0 0 9 6" fill="none" stroke="#555" strokeWidth="1.5"><path d="M1 5l3.500-3.500L8 5" /></svg>
          <svg width="9" height="6" viewBox="0 0 9 6" fill="none" stroke="#555" strokeWidth="1.5"><path d="M1 1l3.500 3.500L8 1" /></svg>
        </ScrollBox>
        <Bar $m={11} />
        <TrayText $w={26}>链接</TrayText>
        <TaskIcon $w={62}>
          <svg width="16" height="18" viewBox="0 0 16 18" fill="none" stroke="#ddd" strokeWidth="1.1"><circle cx="5" cy="9" r="2.500" /><circle cx="11" cy="4" r="2.500" /><path d="M1 17c0-4 2-5 4-5s3 1 4 5M10 8c3 0 5 1 5 5" /></svg>
        </TaskIcon>
        <TrayText $w={64}>{'19%\nCPU使用'}</TrayText>
        <TrayIcon $ml={11}>
          <svg width="13" height="8" viewBox="0 0 13 8" fill="none" stroke="#ddd" strokeWidth="1.3"><path d="M1 7l5.500-6L12 7" /></svg>
        </TrayIcon>
        <TrayIcon $ml={9}>
          <svg width="18" height="14" viewBox="0 0 18 14" fill="none" stroke="#eee" strokeWidth="1.2"><rect x="5" y="3" width="12" height="8" /><path d="M1 4h5M3 1v3M1 4v3h4" /></svg>
        </TrayIcon>
        <TrayIcon $ml={8}>
          <svg width="16" height="14" viewBox="0 0 16 14" fill="none" stroke="#bbb" strokeWidth="1.3"><path d="M1 13C3 6 8 2 14 1M4 13c1-4 4-7 9-8M7 13c1-2 2-4 6-5" strokeDasharray="1.5 1" /><circle cx="13" cy="12" r="1.5" fill="#eee" stroke="none" /></svg>
        </TrayIcon>
        <TrayIcon $ml={6}>
          <svg width="18" height="14" viewBox="0 0 18 14" fill="none" stroke="#ddd" strokeWidth="1.1"><path d="M1 5h3l4-4v12l-4-4H1zM11 4c1 2 1 4 0 6M14 2c2 3 2 7 0 10" /></svg>
        </TrayIcon>
        <TrayIcon $ml={7}>
          <svg width="23" height="14" viewBox="0 0 23 14" fill="none" stroke="#ddd"><rect x=".5" y=".5" width="22" height="13" /><path d="M3 4h17M3 7h17M6 10h11" strokeDasharray="1 1" /></svg>
        </TrayIcon>
        <TrayText $w={13} $ml={9} $fs={13}>中</TrayText>
        <TrayIcon $ml={16}>
          <svg width="14" height="15" viewBox="0 0 14 15"><rect width="14" height="15" rx="3" fill="#ef4a12" /><text x="7" y="12" textAnchor="middle" fontSize="12" fontStyle="italic" fontWeight="700" fill="#fff" fontFamily="Liberation Sans">S</text></svg>
        </TrayIcon>
        <DateText>{'10:29\n2018/9/18'}</DateText>
        <TrayIcon $ml={12}>
          <svg width="16" height="15" viewBox="0 0 16 15" style={{ marginTop: -6 }}><path d="M0 0h16v12H9l-2 3v-3H0z" fill="#f2f2f2" /><path d="M3 3h10M3 6h10M3 9h7" stroke="#333" /></svg>
        </TrayIcon>
      </Taskbar>
      <NoteBadge>1</NoteBadge>
    </Shell>
  );
}
